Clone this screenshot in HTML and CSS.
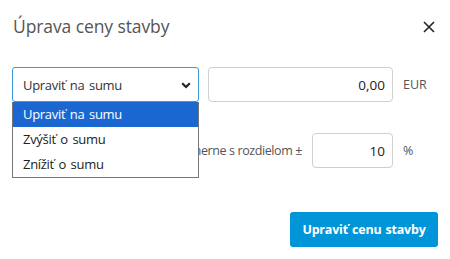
FILE: index.html
```html
<!DOCTYPE html>
<html lang="sk">
<head>
<meta charset="utf-8">
<link rel="stylesheet" href="styles.css">
</head>
<body>
<div class="dialog">
  <div class="header">
    <h1 class="title">Úprava ceny stavby</h1>
    <span class="close">
      <svg width="12" height="12" viewBox="0 0 12 12"><path d="M1 1L11 11M11 1L1 11" stroke="#222" stroke-width="1.6" fill="none"/></svg>
    </span>
  </div>
  <div class="row row-main">
    <div class="select-wrap">
      <div class="select">
        <span>Upraviť na sumu</span>
        <svg class="chev" width="10" height="7" viewBox="0 0 10 7"><path d="M1.2 1.2L5 5L8.8 1.2" stroke="#222" stroke-width="2.2" fill="none"/></svg>
      </div>
      <ul class="options">
        <li class="opt active">Upraviť na sumu</li>
        <li class="opt">Zvýšiť o sumu</li>
        <li class="opt">Znížiť o sumu</li>
      </ul>
    </div>
    <div class="input wide">0,00</div>
    <span class="unit">EUR</span>
  </div>
  <div class="row row-second">
    <span class="label">Rozložiť rovnomerne s rozdielom ±</span>
    <div class="input narrow">10</div>
    <span class="unit">%</span>
  </div>
  <div class="footer">
    <button class="btn">Upraviť cenu stavby</button>
  </div>
</div>
</body>
</html>
```
FILE: styles.css
```css
* { box-sizing: border-box; }
html, body { margin: 0; padding: 0; background: #fff; }
body { font-family: "Open Sans", "Noto Sans", sans-serif; color: #333; width: 450px; height: 259px; overflow: hidden; }
.dialog { padding: 12px 12px 0 12px; }
.header { display: flex; justify-content: space-between; align-items: center; height: 28px; }
.title { margin: 0 0 0 1px; font-size: 17.5px; font-weight: 400; color: #555; letter-spacing: -0.1px; }
.close { display: flex; margin-right: 3px; margin-top: 2px; }
.row { display: flex; align-items: center; }
.row-main { margin-top: 27px; position: relative; z-index: 2; }
.select-wrap { position: relative; width: 187px; }
.select { height: 35px; border: 1px solid #3a9ad9; border-radius: 3px; display: flex; align-items: center; justify-content: space-between; padding: 0 7px 0 10px; font-size: 13px; letter-spacing: -0.3px; word-spacing: 1.5px; color: #333; }
.chev { margin-top: 1px; }
.options { position: absolute; left: 0; top: 35px; width: 187px; margin: 0; padding: 0; list-style: none; background: #fff; border: 1px solid #767676; border-top: none; }
.opt { height: 25px; line-height: 25px; padding-left: 10px; font-size: 13px; letter-spacing: -0.3px; word-spacing: 1.5px; color: #222; }
.opt.active { background: #1a67d2; color: #fff; }
.input { height: 35px; border: 1px solid #cfcfcf; border-radius: 4px; display: flex; align-items: center; justify-content: flex-end; padding-right: 7px; font-size: 13.5px; color: #222; }
.wide { width: 185px; margin-left: 9px; }
.narrow { width: 81px; margin-left: 10px; }
.unit { margin-left: 10px; width: 35px; font-size: 12.5px; color: #555; }
.row-second { margin-top: 31px; justify-content: flex-end; }
.label { font-size: 12.5px; letter-spacing: -0.4px; color: #555; white-space: nowrap; }
.footer { display: flex; justify-content: flex-end; margin-top: 44px; }
.btn { width: 148px; height: 35px; background: #0095d8; border: none; border-radius: 3px; color: #fff; font-family: inherit; font-weight: 700; font-size: 12.5px; letter-spacing: -0.2px; word-spacing: 1px; }
```
